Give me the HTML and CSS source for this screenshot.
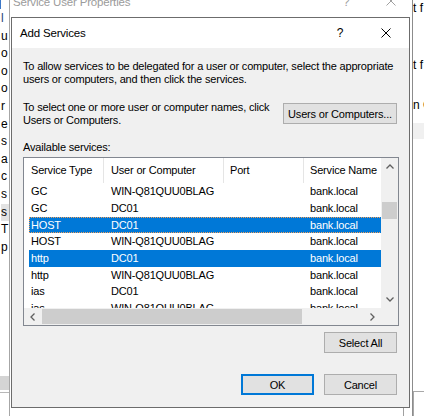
FILE: index.html
```html
<!DOCTYPE html>
<html>
<head>
<meta charset="utf-8">
<title>Add Services</title>
<link rel="stylesheet" href="styles.css">
</head>
<body>
<div class="desk">
  <div class="back-left">
    <div class="bl-accent"></div>
    <div class="bl-lines">
      <div class="blue">l</div>
      <div>u</div>
      <div>o</div>
      <div>o</div>
      <div>o</div>
      <div>r</div>
      <div>e</div>
      <div>s</div>
      <div>a</div>
      <div>c</div>
      <div>s</div>
      <div class="hl">s</div>
      <div>T</div>
      <div>p</div>
    </div>
    <div class="bl-block"></div>
    <div class="bl-rule"></div>
  </div>

  <div class="back-right">
    <div class="br-t1">t f</div>
    <div class="br-t2">t f</div>
    <div class="br-t3">n C</div>
    <div class="br-band"></div>
    <div class="br-box"></div>
  </div>

  <div class="parent">
    <div class="p-title">
      <span class="p-name">Service User Properties</span>
      <span class="p-help">?</span>
      <svg class="p-close" width="10" height="10" viewBox="0 0 10 10"><path d="M0.5 0.5L9.5 9.5M9.5 0.5L0.5 9.5" stroke="#a0a0a0" stroke-width="1" fill="none"/></svg>
    </div>
    <div class="p-frame"></div>
  </div>

  <div class="dialog">
    <div class="d-title">
      <span class="d-name">Add Services</span>
      <span class="cap-btn help">?</span>
      <span class="cap-btn close"><svg width="10" height="10" viewBox="0 0 10 10"><path d="M0.5 0.5L9.5 9.5M9.5 0.5L0.5 9.5" stroke="#000" stroke-width="1" fill="none"/></svg></span>
    </div>
    <div class="d-body">
      <p class="intro">To allow services to be delegated for a user or computer, select the appropriate<br>users or computers, and then click the services.</p>
      <div class="sel-row">
        <p class="sel-text">To select one or more user or computer names, click<br>Users or Computers.</p>
        <div class="btn btn-users">Users or Computers...</div>
      </div>
      <p class="avail">Available services:</p>
      <div class="list">
        <div class="list-main">
          <div class="lv-head">
            <div class="hc c1">Service Type</div>
            <div class="hc c2">User or Computer</div>
            <div class="hc c3">Port</div>
            <div class="hc c4">Service Name</div>
          </div>
          <div class="lv-row"><span class="rc r1">GC</span><span class="rc r2">WIN-Q81QUU0BLAG</span><span class="rc r3"></span><span class="rc r4">bank.local</span></div>
          <div class="lv-row"><span class="rc r1">GC</span><span class="rc r2">DC01</span><span class="rc r3"></span><span class="rc r4">bank.local</span></div>
          <div class="lv-row sel focus"><span class="rc r1">HOST</span><span class="rc r2">DC01</span><span class="rc r3"></span><span class="rc r4">bank.local</span></div>
          <div class="lv-row"><span class="rc r1">HOST</span><span class="rc r2">WIN-Q81QUU0BLAG</span><span class="rc r3"></span><span class="rc r4">bank.local</span></div>
          <div class="lv-row sel"><span class="rc r1">http</span><span class="rc r2">DC01</span><span class="rc r3"></span><span class="rc r4">bank.local</span></div>
          <div class="lv-row"><span class="rc r1">http</span><span class="rc r2">WIN-Q81QUU0BLAG</span><span class="rc r3"></span><span class="rc r4">bank.local</span></div>
          <div class="lv-row"><span class="rc r1">ias</span><span class="rc r2">DC01</span><span class="rc r3"></span><span class="rc r4">bank.local</span></div>
          <div class="lv-row"><span class="rc r1">ias</span><span class="rc r2">WIN-Q81QUU0BLAG</span><span class="rc r3"></span><span class="rc r4">bank.local</span></div>
        </div>
        <div class="vscroll">
          <div class="sb-btn"><svg width="8" height="5" viewBox="0 0 8 5"><path d="M0.5 4.5L4 1L7.5 4.5" stroke="#606060" stroke-width="1.3" fill="none"/></svg></div>
          <div class="sb-track-v"><div class="thumb-v"></div></div>
          <div class="sb-btn"><svg width="8" height="5" viewBox="0 0 8 5"><path d="M0.5 0.5L4 4L7.5 0.5" stroke="#606060" stroke-width="1.3" fill="none"/></svg></div>
        </div>
        <div class="hscroll">
          <div class="sb-btn"><svg width="5" height="8" viewBox="0 0 5 8"><path d="M4.5 0.5L1 4L4.5 7.5" stroke="#606060" stroke-width="1.3" fill="none"/></svg></div>
          <div class="sb-track-h"><div class="thumb-h"></div></div>
          <div class="sb-btn"><svg width="5" height="8" viewBox="0 0 5 8"><path d="M0.5 0.5L4 4L0.5 7.5" stroke="#606060" stroke-width="1.3" fill="none"/></svg></div>
        </div>
        <div class="corner"></div>
      </div>
      <div class="btn btn-selall">Select All</div>
      <div class="btn-row">
        <div class="btn btn-ok">OK</div>
        <div class="btn btn-cancel">Cancel</div>
      </div>
    </div>
  </div>
</div>
</body>
</html>
```

FILE: styles.css
```css
* { box-sizing: border-box; margin: 0; padding: 0; }
html, body { width: 424px; height: 416px; overflow: hidden; background: #fff; }
body {
  font-family: "Liberation Sans", Arial, sans-serif;
  font-size: 11px;
  letter-spacing: -0.18px;
  color: #000;
}
.desk { position: relative; width: 424px; height: 416px; overflow: hidden; background: #fff; }

/* window far behind, left strip */
.back-left { position: absolute; left: 0; top: 0; width: 9px; height: 416px; overflow: hidden; background: #fff; }
.bl-accent { position: absolute; left: 0; top: 0; width: 1px; height: 9px; background: #3c78c8; }
.bl-lines { padding-top: 10px; padding-left: 1px; display: flex; flex-direction: column; line-height: 17.6px; font-size: 12px; white-space: nowrap; }
.bl-lines .blue { color: #1f3f7a; }
.bl-lines .hl { background: #e3e3e3; }
.bl-block { position: absolute; left: 0; top: 376px; width: 9px; height: 14px; background: #d4d4d4; }
.bl-rule { position: absolute; left: 0; top: 392px; width: 9px; height: 1px; background: #b8b8b8; }

/* window far behind, right strip */
.back-right { position: absolute; left: 413px; top: 0; width: 11px; height: 416px; overflow: hidden; background: #fff; white-space: nowrap; line-height: 15px; font-size: 12px; letter-spacing: 0; }
.br-t1 { margin-top: 1px; }
.br-t2 { margin-top: 42px; }
.br-t3 { margin-top: 25px; }
.br-band { margin-top: 10px; height: 16px; background: #f0f0f0; }
.br-box { margin-top: 252px; height: 40px; border-top: 1px solid #a8a8a8; border-left: 1px solid #a8a8a8; }

/* parent window */
.parent {
  position: absolute; left: 9px; top: -13px; width: 404px; height: 440px;
  border-left: 1px solid #a6a6a6; border-right: 1px solid #8c8c8c;
  background: #fff;
}
.p-title { height: 30px; display: flex; align-items: center; padding-left: 3px; color: #9b9b9b; font-size: 11.5px; }
.p-name { flex: none; }
.p-help { position: absolute; left: 333px; top: 8px; font-size: 12px; color: #a0a0a0; }
.p-close { position: absolute; left: 376px; top: 9px; }
.p-frame { position: absolute; left: 60px; top: 400px; width: 334px; height: 60px; border-right: 1px solid #a0a0a0; }

/* Add Services dialog */
.dialog {
  position: absolute; left: 11px; top: 17px; width: 399px; height: 391px;
  border: 1px solid #6c6c6c; background: #f0f0f0;
  display: flex; flex-direction: column;
}
.d-title { height: 30px; background: #fff; display: flex; align-items: center; padding-left: 8px; flex: none; }
.d-name { font-size: 11.5px; flex: 1; }
.cap-btn { width: 46px; height: 30px; display: flex; align-items: center; justify-content: center; flex: none; }
.cap-btn.help { font-size: 12px; letter-spacing: 0; }
.d-body { display: flex; flex-direction: column; padding: 12px 10px 0 11px; }
.intro { line-height: 13px; white-space: nowrap; }
.sel-row { display: flex; margin-top: 15px; }
.sel-text { flex: 1; line-height: 13px; white-space: nowrap; }
.avail { margin-top: 14px; line-height: 13px; }

.btn {
  height: 21px; border: 1px solid #adadad; background: #e1e1e1;
  display: flex; align-items: center; justify-content: center; flex: none;
  white-space: nowrap;
}
.btn-users { width: 114px; margin-top: 2px; margin-right: 2px; }
.btn-selall { width: 73px; align-self: flex-end; margin-top: 6px; margin-right: 2px; }
.btn-row { display: flex; justify-content: flex-end; gap: 10px; margin-top: 21px; margin-right: 2px; }
.btn-ok { width: 73px; border-color: #0078d7; box-shadow: inset 0 0 0 1px #0078d7; }
.btn-cancel { width: 73px; }

/* list view */
.list {
  margin-top: 3px; width: 376px; height: 169px;
  border: 1px solid #828790; background: #fff;
  display: grid; grid-template-columns: 357px 17px; grid-template-rows: 150px 17px;
}
.list-main { overflow: hidden; white-space: nowrap; }
.lv-head { display: flex; height: 25.33px; width: 420px; }
.hc { flex: none; height: 25.33px; line-height: 25.33px; border-right: 1px solid #e5e5e5; overflow: hidden; }
.hc.c1 { width: 80px; padding-left: 7px; }
.hc.c2 { width: 120px; padding-left: 7px; }
.hc.c3 { width: 80px; padding-left: 6px; }
.hc.c4 { width: 130px; padding-left: 6px; }
.lv-row {
  display: grid; grid-template-columns: 75px 120px 80px 130px;
  margin-left: 5px; width: 405px; height: 16.67px; line-height: 16.67px;
}
.rc { overflow: hidden; }
.r1 { padding-left: 2px; }
.r2 { padding-left: 7px; }
.r3 { padding-left: 6px; }
.r4 { padding-left: 6px; }
.lv-row.sel { background: #0078d7; color: #fff; }
.lv-row.focus { outline: 1px dotted #f3a05a; outline-offset: -1px; }

.vscroll { background: #f0f0f0; display: flex; flex-direction: column; }
.sb-btn { flex: none; width: 17px; height: 17px; display: flex; align-items: center; justify-content: center; }
.sb-track-v { flex: 1; }
.thumb-v { margin: 27px 1px 0 1px; height: 17px; background: #cdcdcd; }
.hscroll { background: #f0f0f0; display: flex; }
.sb-track-h { flex: 1; }
.thumb-h { margin: 1px 0 0 1px; width: 260px; height: 15px; background: #cdcdcd; }
.corner { background: #f0f0f0; }
```
